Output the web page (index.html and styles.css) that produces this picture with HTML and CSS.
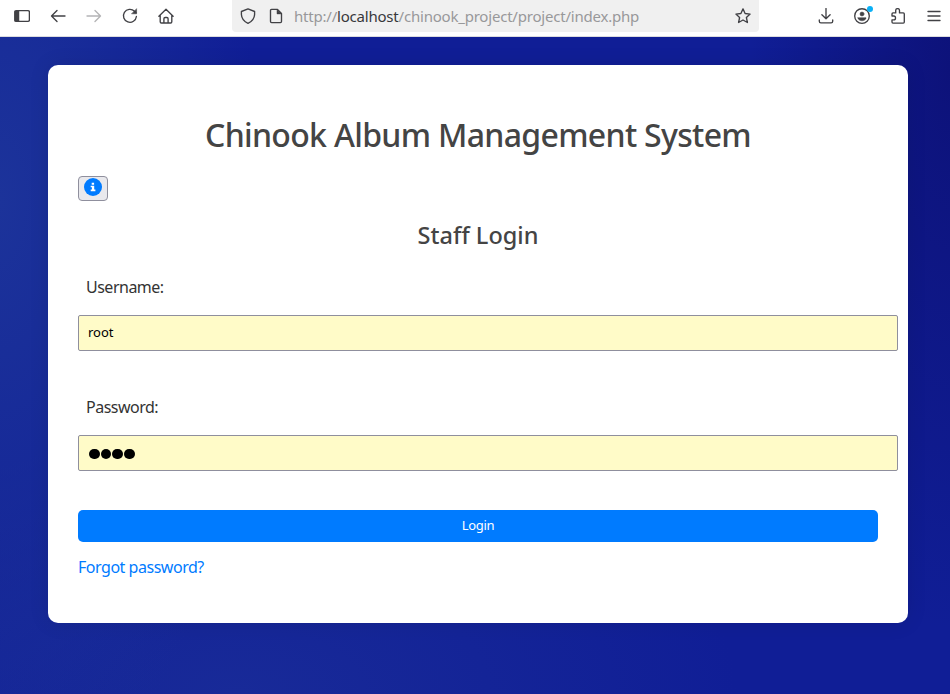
FILE: index.html
```html
<!DOCTYPE html>
<html lang="en">
<head>
<meta charset="utf-8">
<title>Chinook Album Management System</title>
<link rel="stylesheet" href="styles.css">
</head>
<body>
<header class="toolbar">
  <nav class="nav-icons">
    <svg class="icon" viewBox="0 0 16 16"><rect x=".8" y="2.6" width="14.6" height="10.8" rx="1.5"/><path class="solid" d="M1 3h4v10H1z"/></svg>
    <svg class="icon" viewBox="0 0 16 16"><path d="M15 8H1.500M7 2.500 1.500 8 7 13.500"/></svg>
    <svg class="icon disabled" viewBox="0 0 16 16"><path d="M1 8h13.500M9 2.500 14.500 8 9 13.500"/></svg>
    <svg class="icon" viewBox="0 0 16 16"><path d="M14.400 8.500A6.500 6.500 0 1 1 12.500 3.200L14 4.800"/><path class="solid" d="M14.600 1v4.800H9.800z"/></svg>
    <svg class="icon" viewBox="0 0 16 16"><path d="M.9 8.200 8 1.300l7.100 6.900M2.200 7.500v6.300q0 1.200 1.200 1.200h9.200q1.200 0 1.200-1.200V7.500M5.900 15v-4.300q0-1.200 1.200-1.200h1.800q1.200 0 1.200 1.200V15"/></svg>
  </nav>
  <div class="address">
    <svg class="icon" viewBox="0 0 16 16"><path d="M8 .9 14.600 3.500V6.500Q14.300 12.500 8 15.300 1.700 12.500 1.400 6.500V3.500z"/></svg>
    <svg class="icon page" viewBox="0 0 16 16"><path d="M3.500 1.400h6l4 4V13.500q0 1.100-1.100 1.100H3.600q-1.100 0-1.100-1.100v-11q0-1.100 1-1.100z"/><path class="solid" d="M9 1.400v4.500h4.500z"/></svg>
    <div class="url">http://<span class="host">localhost</span>/chinook_project/project/index.php</div>
    <svg class="icon star" viewBox="0 0 16 16"><path d="m8 .9 2.100 4.600 5 .6-3.700 3.400 1 5L8 12l-4.400 2.500 1-5L.9 6.100l5-.6z"/></svg>
  </div>
  <div class="actions">
    <svg class="icon" viewBox="0 0 16 16"><path d="M8 .5v10.200M3.900 6.700 8 10.800l4.100-4.100M1.300 12v1.200q0 1.600 1.600 1.600h10.200q1.600 0 1.600-1.600V12"/></svg>
    <div class="account">
      <svg class="icon" viewBox="0 0 16 16"><circle cx="8" cy="8" r="7.300"/><circle class="solid" cx="8" cy="6" r="2"/><path class="solid" d="M4 9.700h8v1Q10.500 12.800 8 12.800T4 10.700z"/></svg>
      <span class="dot"></span>
    </div>
    <svg class="icon" viewBox="0 0 16 16"><path d="M2 8V5.900q0-1 1-1h2.700V2.500q0-1.900 1.900-1.900t1.900 1.900v2.400h3.800q1 0 1 1v8.200q0 1-1 1H3q-1 0-1-1v-2.300h1.800q1.700 0 1.700-1.900T3.800 8z"/></svg>
    <svg class="icon" viewBox="0 0 16 16"><path d="M2 3.500h12M2 8h12M2 12.500h12"/></svg>
  </div>
</header>
<main class="page-body">
  <section class="card">
    <h1>Chinook Album Management System</h1>
    <button class="info" aria-label="Information">
      <svg viewBox="0 0 18 18"><circle cx="9" cy="9" r="9"/><path d="M7.700 4.700h2.400v2H7.700zM6.700 7.700h3.500v3.900h1.200v1.700H6.700v-1.700h1.200V9.300H6.700z"/></svg>
    </button>
    <h2>Staff Login</h2>
    <form>
      <label for="user">Username:</label>
      <input id="user" type="text" value="root">
      <label for="pass">Password:</label>
      <div class="field" id="pass"><i></i><i></i><i></i><i></i></div>
      <button class="login" type="button">Login</button>
    </form>
    <a class="forgot" href="#">Forgot password?</a>
  </section>
</main>
</body>
</html>
```
FILE: styles.css
```css
* { box-sizing: border-box; }
body {
  margin: 0;
  height: 694px;
  overflow: hidden;
  display: flex;
  flex-direction: column;
  font-family: "Noto Sans", "Open Sans", sans-serif;
  color: #333;
}
.toolbar {
  height: 37px;
  flex: none;
  display: flex;
  background: #fff;
  border-bottom: 1px solid #dcdce0;
}
.nav-icons { width: 232px; height: 32px; padding-left: 14px; display: flex; align-items: center; gap: 20px; }
.icon {
  width: 16px;
  height: 16px;
  flex: none;
  display: block;
  fill: none;
  stroke: #414145;
  stroke-width: 1.35;
  stroke-linecap: round;
  stroke-linejoin: round;
}
.icon .solid { fill: #414145; stroke-width: .5; }
.disabled { stroke: #b4b4b6; }
.address {
  width: 527px;
  height: 32px;
  padding: 0 8px;
  display: flex;
  align-items: center;
  background: #f0f0f0;
  border-radius: 0 0 4px 4px;
}
.page { margin-left: 12px; }
.url { margin-left: 10px; font-size: 15px; line-height: 32px; letter-spacing: -.21px; color: #98989a; white-space: nowrap; }
.host { color: #38383b; }
.star { margin-left: auto; }
.actions { height: 32px; padding-left: 58.500px; display: flex; align-items: center; gap: 20.200px; }
.account { position: relative; }
.dot { position: absolute; top: -2px; right: -3px; width: 6px; height: 6px; border-radius: 50%; background: #0ab0f6; }
.page-body {
  flex: 1;
  padding: 28px 42px 0 48px;
  background:
    radial-gradient(ellipse 200px 560px at 100% 5%, #0d127a 0%, rgba(13, 18, 122, 0) 100%),
    radial-gradient(ellipse 260px 620px at 0 25%, #1c339a 0%, rgba(28, 51, 154, 0) 100%),
    radial-gradient(ellipse 500px 260px at 25% 100%, #182a98 0%, rgba(24, 42, 152, 0) 100%),
    #101e96;
}
.card {
  width: 860px;
  height: 558px;
  padding: 48px 30px 0;
  background: #fff;
  border-radius: 10px;
  box-shadow: 0 0 20px rgba(0, 0, 0, .1);
}
h1, h2 { margin: 0; text-align: center; font-weight: 500; color: #444; white-space: nowrap; }
h1 { font-size: 32px; line-height: 44px; letter-spacing: -.68px; }
.info {
  display: flex;
  justify-content: center;
  width: 30px;
  height: 25px;
  margin-top: 19px;
  padding: 1px 0 0;
  background: #e9e9ed;
  border: 1px solid #8f8f9d;
  border-radius: 4px;
}
.info svg { width: 18px; height: 18px; fill: #007bff; }
.info path { fill: #fff; }
h2 { margin-top: 18px; font-size: 23.500px; line-height: 32px; }
form { margin-top: 24px; }
label { display: block; margin-left: 8px; font-size: 16px; line-height: 24px; letter-spacing: -.5px; }
input, .field {
  display: flex;
  align-items: center;
  width: 820px;
  height: 36px;
  margin: 16px 0 44px;
  padding: 0 9px 2px;
  border: 1px solid #8f8f9d;
  border-radius: 2px;
  background: #fffbc8;
  color: #000;
  font: 13px "Noto Sans", sans-serif;
}
.field { gap: 1px; margin-bottom: 39px; padding: 2px 9px 0 10px; }
.field i { width: 10.700px; height: 10.700px; border-radius: 50%; background: #000; }
.login {
  display: block;
  width: 800px;
  height: 32px;
  padding: 0 0 2px;
  border: 0;
  border-radius: 5px;
  background: #007bff;
  color: #fff;
  font: 13px "Noto Sans", sans-serif;
  letter-spacing: -.3px;
}
.forgot { display: inline-block; margin-top: 13px; font-size: 16px; line-height: 24px; letter-spacing: -.47px; color: #007bff; text-decoration: none; }
```
